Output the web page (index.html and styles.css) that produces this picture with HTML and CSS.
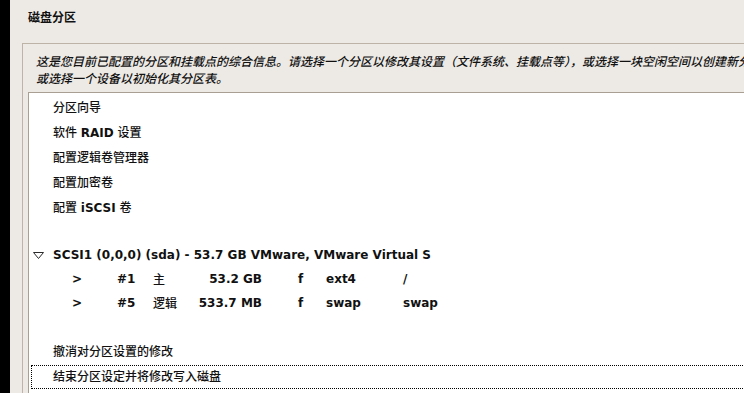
FILE: index.html
```html
<!DOCTYPE html>
<html lang="zh-CN">
<head>
<meta charset="utf-8">
<title>磁盘分区</title>
<link rel="stylesheet" href="styles.css">
</head>
<body>
<div class="screen">
  <div class="strip"></div>
  <div class="main">
    <h1 class="title">磁盘分区</h1>
    <div class="frame">
      <p class="desc">这是您目前已配置的分区和挂载点的综合信息。请选择一个分区以修改其设置（文件系统、挂载点等），或选择一块空闲空间以创建新分区，<br>或选择一个设备以初始化其分区表。</p>
      <div class="list">
        <div class="row item">分区向导</div>
        <div class="row item">软件 <b>RAID</b> 设置</div>
        <div class="row item">配置逻辑卷管理器</div>
        <div class="row item">配置加密卷</div>
        <div class="row item">配置 <b>iSCSI</b> 卷</div>
        <div class="row blank1"></div>
        <div class="row disk">
          <svg class="tri" width="11" height="7" viewBox="0 0 11 7"><polygon points="0.5,0.5 10.5,0.5 5.5,6.5" fill="none" stroke="#2a2a2a" stroke-width="1"/></svg>
          <b>SCSI1 (0,0,0) (sda) - 53.7 GB VMware, VMware Virtual S</b>
        </div>
        <div class="row part">
          <b>&gt;</b><b>#1</b><span>主</span><b class="size">53.2 GB</b><b class="flag">f</b><b>ext4</b><b>/</b>
        </div>
        <div class="row part">
          <b>&gt;</b><b>#5</b><span>逻辑</span><b class="size">533.7 MB</b><b class="flag">f</b><b>swap</b><b>swap</b>
        </div>
        <div class="row blank2"></div>
        <div class="row item">撤消对分区设置的修改</div>
        <div class="row item focus">结束分区设定并将修改写入磁盘</div>
      </div>
    </div>
  </div>
</div>
</body>
</html>
```
FILE: styles.css
```css
html, body {
  margin: 0;
  padding: 0;
}
body {
  width: 744px;
  height: 393px;
  overflow: hidden;
  background: #edeae5;
  color: #111;
  font-family: "DejaVu Sans", "Noto Sans CJK SC", sans-serif;
  font-size: 12px;
  font-weight: 500;
}
.screen {
  display: flex;
  height: 393px;
  overflow: hidden;
}
.strip {
  flex: none;
  width: 10px;
  background: #000;
}
.main {
  flex: 1;
  min-width: 0;
  padding-left: 12px;
  overflow: hidden;
}
.title {
  margin: 0;
  padding: 9px 0 0 6px;
  height: 16px;
  line-height: 16px;
  font-size: 12px;
  font-weight: bold;
  font-family: "Noto Sans CJK SC", sans-serif;
}
.frame {
  margin-top: 18px;
  width: 800px;
  height: 420px;
  border: 1px solid #bdb3a6;
}
.desc {
  margin: 0;
  padding: 8px 0 0 13px;
  line-height: 17px;
  white-space: nowrap;
  font-style: italic;
  font-family: "Noto Sans CJK SC", sans-serif;
  font-size: 12px;
}
.list {
  margin: 6px 0 0 5px;
  padding-top: 3px;
  height: 400px;
  background: #fff;
  border-top: 1px solid #a99f92;
  border-left: 1px solid #a99f92;
}
.row {
  box-sizing: border-box;
  white-space: nowrap;
}
.row b {
  font-weight: bold;
  font-family: "DejaVu Sans", sans-serif;
}
.item {
  height: 25px;
  line-height: 25px;
  padding-left: 24px;
}
.blank1 {
  height: 22px;
}
.blank2 {
  height: 25px;
}
.disk {
  height: 24px;
  display: flex;
  align-items: center;
  padding-left: 4px;
}
.tri {
  flex: none;
  margin-right: 9px;
}
.part {
  height: 24px;
  line-height: 24px;
  padding-left: 43px;
  display: grid;
  grid-template-columns: 45px 36px 40px 69px 64px 77px auto;
}
.part span {
  font-family: "Noto Sans CJK SC", sans-serif;
}
.part .size {
  text-align: right;
}
.part .flag {
  padding-left: 36px;
}
.item.focus {
  height: 24px;
  line-height: 22px;
  margin-left: 2px;
  padding-left: 21px;
  border: 1px dotted #000;
  border-right: none;
}
```
